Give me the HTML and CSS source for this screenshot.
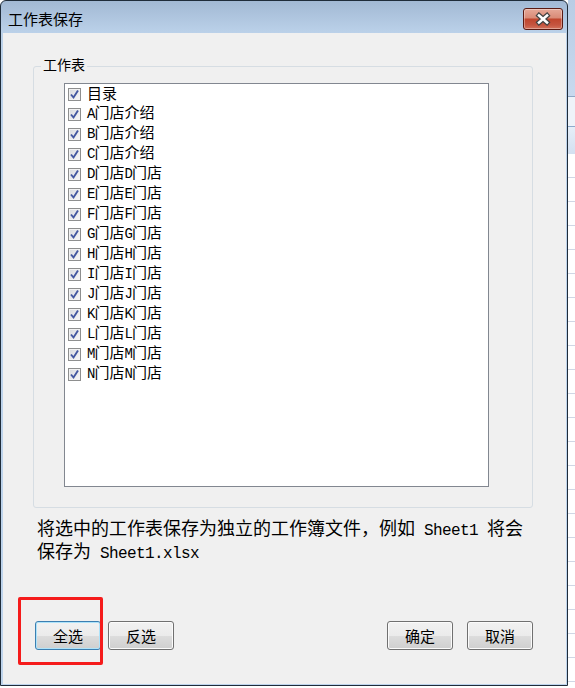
FILE: index.html
```html
<!DOCTYPE html>
<html>
<head>
  <title>工作表保存</title>
  <link rel="stylesheet" href="styles.css">
</head>
<body>

  <div class="screen">
    <div class="window">
      <div class="titlebar">
        <span class="title">工作表保存</span>
        <button class="close">
          <svg width="18" height="14" viewBox="0 0 18 14">
            <path d="M5 3.5 L13 10.5 M13 3.5 L5 10.5" stroke="#434343" stroke-width="5" stroke-linecap="square"/>
            <path d="M5 3.5 L13 10.5 M13 3.5 L5 10.5" stroke="#ffffff" stroke-width="2.6" stroke-linecap="square"/>
          </svg>
        </button>
      </div>

      <div class="client">
        <fieldset class="group">
          <legend>工作表</legend>
          <ul class="sheets" id="sheets"></ul>
        </fieldset>

        <p class="hint">将选中的工作表保存为独立的工作簿文件，例如<span class="en"> Sheet1 </span>将会<br>保存为<span class="en"> Sheet1.xlsx</span></p>

        <div class="actions">
          <div class="left">
            <span class="mark"><button class="btn focus">全选</button></span>
            <button class="btn">反选</button>
          </div>
          <div class="right">
            <button class="btn">确定</button>
            <button class="btn">取消</button>
          </div>
        </div>
      </div>
    </div>

    <div class="behind">
      <div class="b-top"></div>
      <div class="b-ribbon"></div>
      <div class="b-head"></div>
      <div class="b-grid"></div>
    </div>
  </div>

  <script>
    let sheets = ['目录', 'A门店介绍', 'B门店介绍', 'C门店介绍'];
    let letters = 'DEFGHIJKLMN';
    for (let i = 0; i < letters.length; i++) {
      sheets.push(letters[i] + '门店' + letters[i] + '门店');
    }

    let list = document.getElementById('sheets');
    let check = '<span class="box"><svg width="11" height="11" viewBox="0 0 11 11">' +
      '<path d="M2 5.5 L4.5 8.5 L9 1.5" fill="none" stroke="#4257a0" stroke-width="1.9"/></svg></span>';

    sheets.forEach(function (name) {
      let label = name.replace(/([A-Z])/g, '<span class="en">$1</span>');
      let li = document.createElement('li');
      li.innerHTML = check + '<span class="name">' + label + '</span>';
      list.appendChild(li);
    });
  </script>

</body>
</html>
```

FILE: styles.css
```css
body {
  margin: 0;
  background: #fff;
  font-family: "Noto Sans CJK SC", sans-serif;
  color: #000;
}

.screen {
  display: flex;
  width: 575px;
  height: 688px;
  overflow: hidden;
}

.window {
  flex: none;
  width: 568px;
  height: 686px;
  box-sizing: border-box;
  border: 1px solid #1f2c3a;
  border-radius: 6px 6px 0 0;
  background: linear-gradient(#a2b9d4, #bcd2ea 33px, #bed4ec);
  display: flex;
  flex-direction: column;
}

.titlebar {
  flex: none;
  height: 32px;
  display: flex;
  justify-content: space-between;
  align-items: flex-start;
}

.title {
  font-size: 15px;
  line-height: 20px;
  padding: 8px 0 0 7px;
}

.close {
  margin: 7px 4px 0 0;
  width: 40px;
  height: 22px;
  padding: 0;
  border: 1px solid #5b1a12;
  border-radius: 3px;
  background: linear-gradient(#e6a898 0%, #d98a76 45%, #c0452d 50%, #c55540 80%, #d3735d 100%);
  box-shadow: inset 0 0 0 1px rgba(255, 255, 255, 0.35);
  display: flex;
  align-items: center;
  justify-content: center;
}

.client {
  flex: 1;
  margin: 0 1px 1px 2px;
  background: #f0f0f0;
  display: flex;
  flex-direction: column;
}

.group {
  margin: 23px 0 0 30px;
  width: 500px;
  box-sizing: border-box;
  min-width: 0;
  padding: 0;
  border: 1px solid #d6dde3;
  border-radius: 3px;
}

.group legend {
  margin-left: 7px;
  padding: 0 2px 5px;
  font-size: 14px;
  line-height: 16px;
}

.sheets {
  list-style: none;
  margin: 6px 43px 20px 30px;
  padding: 0 0 0 3px;
  height: 404px;
  box-sizing: border-box;
  border: 1px solid #828790;
  background: #fff;
}

.sheets li {
  height: 20px;
  display: flex;
  align-items: center;
  font-size: 15px;
  line-height: 18px;
}

.sheets .name {
  margin-top: -2px;
}

.sheets .en {
  font-family: "Liberation Mono", monospace;
  font-size: 14px;
  letter-spacing: -0.9px;
}

.box {
  width: 13px;
  height: 13px;
  box-sizing: border-box;
  margin-right: 6px;
  border: 1px solid #8e8f8f;
  background: linear-gradient(135deg, #d6d9de, #f8f8f8);
  box-shadow: inset 0 0 0 1px #f2f2f2;
  display: flex;
  align-items: center;
  justify-content: center;
}

.box svg {
  display: block;
}

.hint {
  margin: 8px 0 0 34px;
  font-size: 18px;
  line-height: 22px;
  white-space: nowrap;
}

.hint .en {
  font-family: "Liberation Mono", monospace;
  font-size: 16px;
  line-height: 16px;
  letter-spacing: -0.6px;
}

.actions {
  margin-top: auto;
  display: flex;
  justify-content: space-between;
  padding: 0 33px 34px 32px;
}

.left {
  display: flex;
  gap: 7px;
}

.right {
  display: flex;
  gap: 14px;
}

.btn {
  width: 66px;
  height: 29px;
  padding: 0;
  font-family: inherit;
  font-size: 15px;
  color: #000;
  border: 1px solid #707070;
  border-radius: 3px;
  background: linear-gradient(#f2f2f2 0%, #ebebeb 50%, #dddddd 51%, #cfcfcf 100%);
  box-shadow: inset 0 0 0 1px #fbfbfb;
}

.btn.focus {
  border-color: #3c7fb1;
  box-shadow: inset 0 0 0 1px #aee3fa;
}

.mark {
  position: relative;
  display: flex;
}

.mark::after {
  content: "";
  position: absolute;
  top: -24px;
  right: -2px;
  bottom: -15px;
  left: -17px;
  border: 3px solid #f51b1b;
  border-radius: 2px;
  pointer-events: none;
}

.behind {
  flex: 1;
  display: flex;
  flex-direction: column;
}

.b-top {
  height: 96px;
  background: linear-gradient(#b9cde5, #c8d9ee);
  border-bottom: 1px solid #8fa7c5;
}

.b-ribbon {
  height: 29px;
  background: #eef3f9;
}

.b-head {
  height: 27px;
  border-top: 1px solid #8eaacc;
  background: linear-gradient(#e6eef8, #d3e0f0);
}

.b-grid {
  flex: 1;
  background: repeating-linear-gradient(to bottom, #fff 0 23px, #d0d7e5 23px 24px);
}
```
